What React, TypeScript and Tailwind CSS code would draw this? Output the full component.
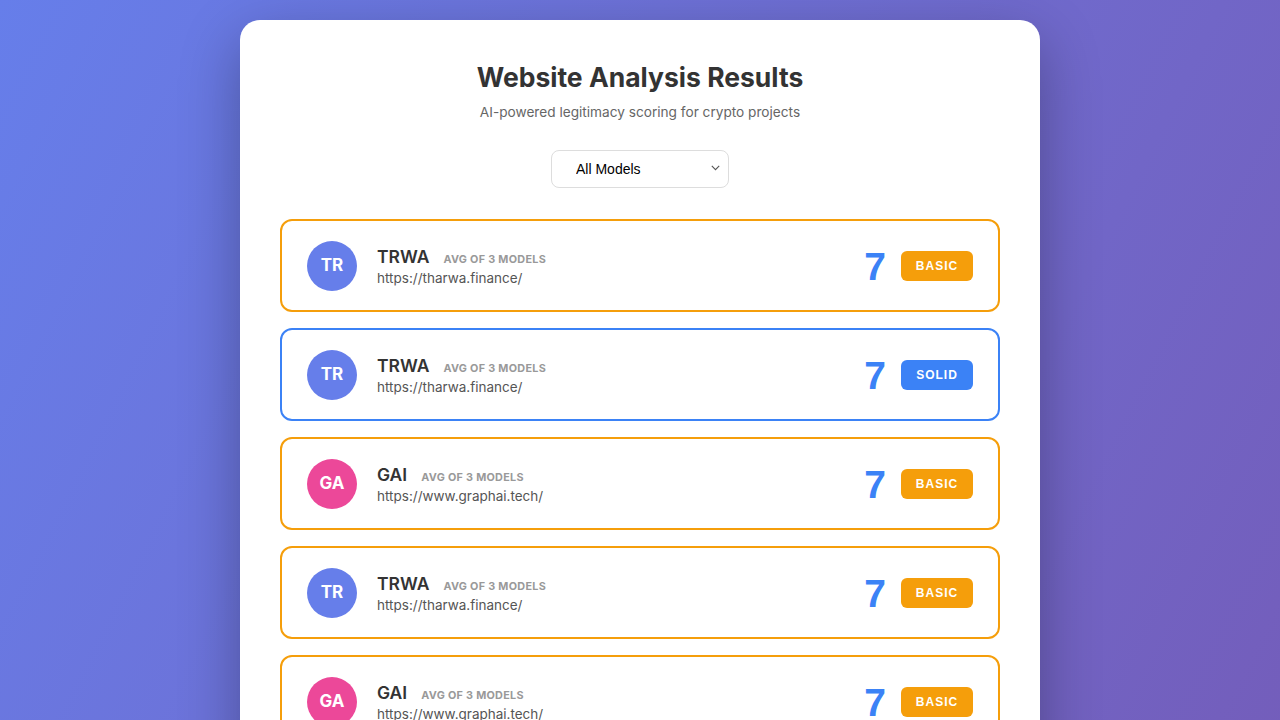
import React from "react";

type Item = { code: string; name: string; url: string; tier: "BASIC" | "SOLID"; color: string };

const TR = { code: "TR", name: "TRWA", url: "https://tharwa.finance/", color: "bg-[#667eea]" };
const GA = { code: "GA", name: "GAI", url: "https://www.graphai.tech/", color: "bg-[#ec4899]" };

const items: Item[] = [
  { ...TR, tier: "BASIC" },
  { ...TR, tier: "SOLID" },
  { ...GA, tier: "BASIC" },
  { ...TR, tier: "BASIC" },
  { ...GA, tier: "BASIC" },
  { ...TR, tier: "BASIC" },
  { ...GA, tier: "BASIC" },
  { ...TR, tier: "SOLID" },
  { ...GA, tier: "BASIC" },
  { ...TR, tier: "BASIC" },
  { ...GA, tier: "BASIC" },
  { ...TR, tier: "BASIC" },
  { ...GA, tier: "BASIC" },
  { ...TR, tier: "BASIC" },
  { ...GA, tier: "BASIC" },
  { ...TR, tier: "BASIC" },
  { ...GA, tier: "BASIC" },
  { ...TR, tier: "BASIC" },
  { ...GA, tier: "BASIC" },
  { ...TR, tier: "BASIC" },
  { ...GA, tier: "BASIC" },
];

function Row({ it }: { it: Item }) {
  const solid = it.tier === "SOLID";
  return (
    <div
      className={`flex items-center rounded-[12px] border-2 bg-white px-[25px] py-[19.5px] ${
        solid ? "border-[#3b82f6]" : "border-[#f59e0b]"
      }`}
    >
      <div
        className={`flex h-[50px] w-[50px] shrink-0 items-center justify-center rounded-full ${it.color} pt-[1px] text-[17px] font-bold text-white`}
      >
        {it.code}
      </div>
      <div className="ml-[20px] flex flex-1 flex-col pt-[3px]">
        <div className="flex items-baseline">
          <span className="text-[17.5px] leading-[22px] font-semibold text-[#333]">{it.name}</span>
          <span className="ml-[14px] text-[10.8px] font-bold uppercase tracking-[0.3px] text-[#999]">
            Avg of 3 models
          </span>
        </div>
        <div className="text-[13.5px] leading-[20px] text-[#555]">{it.url}</div>
      </div>
      <div className="flex items-center gap-[15px]">
        <span className="pt-[1px] font-['Liberation_Sans',Arial,sans-serif] text-[39px] leading-none font-bold text-[#3b82f6]">
          7
        </span>
        <span
          className={`flex h-[30px] w-[72px] items-center justify-center rounded-[6px] font-['Liberation_Sans',Arial,sans-serif] text-[12px] font-bold tracking-[1px] text-white ${
            solid ? "bg-[#3b82f6]" : "bg-[#f59e0b]"
          }`}
        >
          {it.tier}
        </span>
      </div>
    </div>
  );
}

export default function App() {
  return (
    <div className="min-h-screen bg-gradient-to-br from-[#667eea] to-[#764ba2] px-5 pt-[20px] pb-[20px] font-['Inter','Noto_Sans',sans-serif]">
      <div className="mx-auto w-[800px] rounded-[20px] bg-white p-[40px] shadow-[0_20px_60px_rgba(0,0,0,0.3)]">
        <h1 className="text-center text-[26.5px] leading-[34px] font-bold text-[#333]">Website Analysis Results</h1>
        <p className="mt-[8px] text-center text-[13.65px] leading-[20px] text-[#666]">
          AI-powered legitimacy scoring for crypto projects
        </p>
        <div className="mt-[28px] flex justify-center">
          <div className="relative">
            <select
              defaultValue="all"
              className="h-[38px] w-[178px] appearance-none rounded-[8px] border border-[#ddd] bg-white pl-[24px] pr-[30px] font-['Liberation_Sans',Arial,sans-serif] text-[14px] text-black outline-none"
            >
              <option value="all">All Models</option>
            </select>
            <svg
              className="pointer-events-none absolute right-[9px] top-[15px]"
              width="9"
              height="6"
              viewBox="0 0 9 6"
              fill="none"
            >
              <path d="M0.8 0.8 L4.5 4.6 L8.2 0.8" stroke="#555" strokeWidth="1.1" />
            </svg>
          </div>
        </div>
        <div className="mt-[31px] flex flex-col gap-[16px]">
          {items.map((it, i) => (
            <Row key={i} it={it} />
          ))}
        </div>
      </div>
    </div>
  );
}
